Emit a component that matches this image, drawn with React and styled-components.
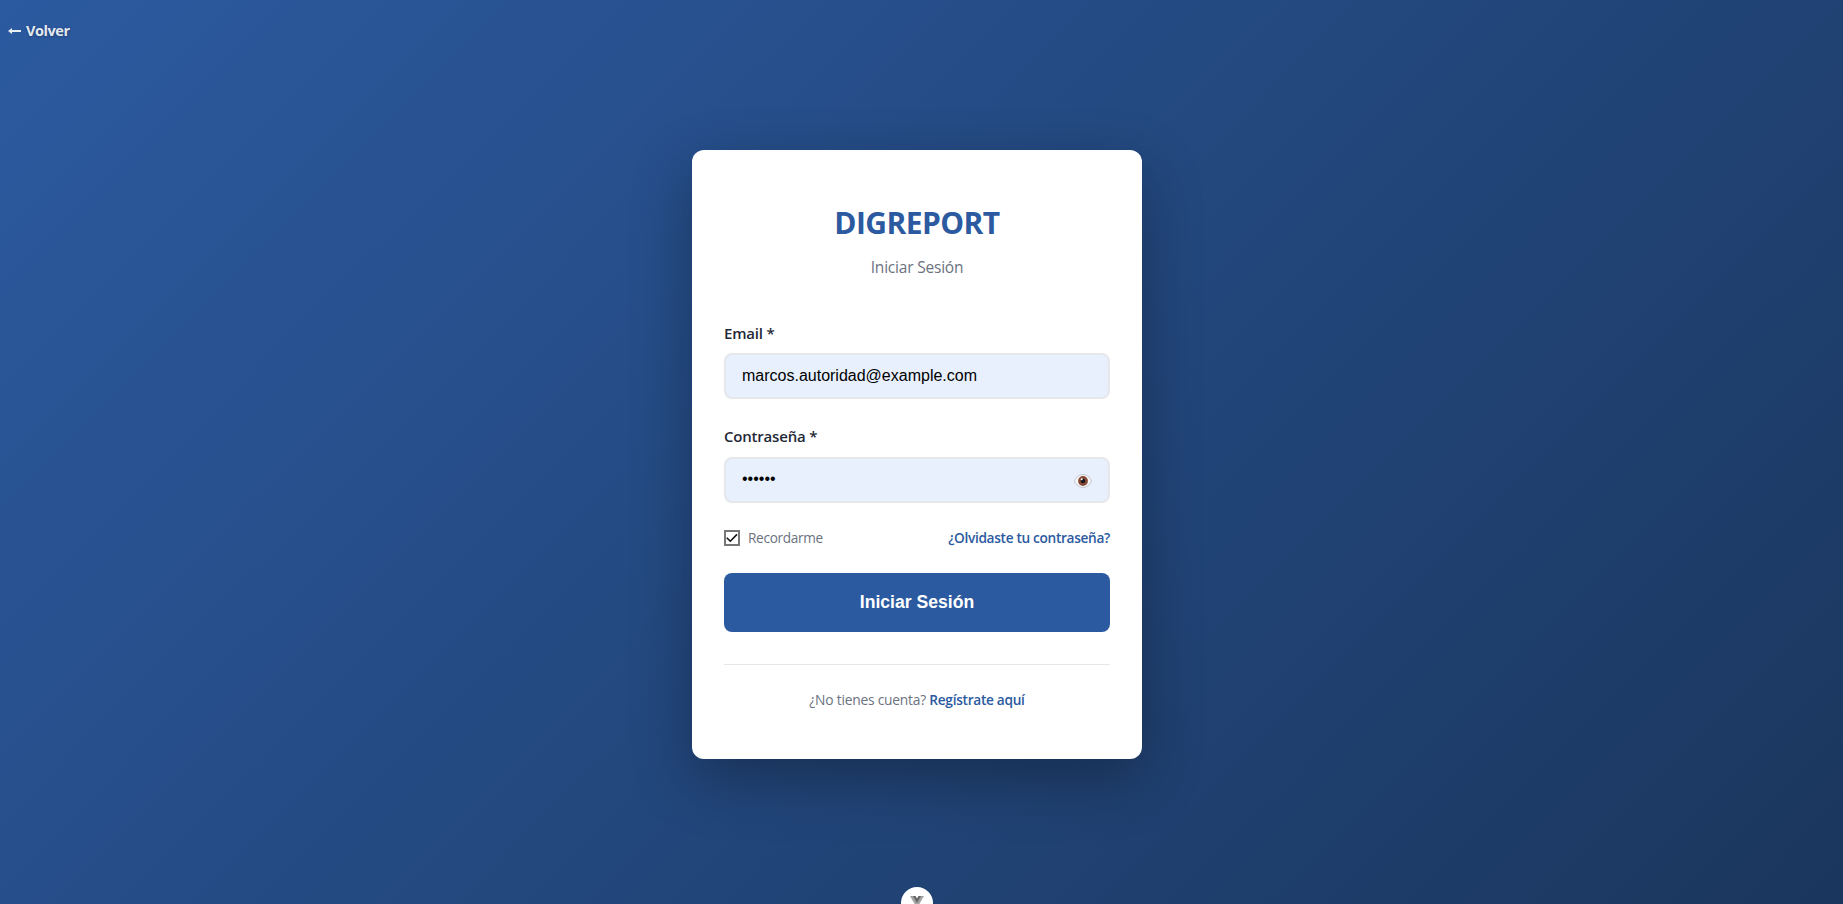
import React, { useState } from "react";
import styled, { createGlobalStyle } from "styled-components";

const GlobalStyle = createGlobalStyle`
  *, *::before, *::after { box-sizing: border-box; }
  html, body { margin: 0; padding: 0; overflow: hidden; }
  body { font-family: "Open Sans", "Noto Sans", sans-serif; }
`;

const Page = styled.main`
  position: relative;
  display: flex;
  flex-direction: column;
  align-items: center;
  height: 904px;
  padding: 150px 9px 0 0;
  overflow: hidden;
  background: linear-gradient(135deg, #2c5aa0 0%, #1a365d 100%);
`;

const BackLink = styled.a`
  position: absolute;
  top: 20px;
  left: 8px;
  display: flex;
  align-items: center;
  gap: 5px;
  height: 22px;
  color: rgba(255, 255, 255, 0.9);
  font-size: 14.5px;
  font-weight: 700;
  letter-spacing: -0.45px;
  line-height: 22px;
  text-decoration: none;
  text-shadow: 0 1px 3px rgba(0, 0, 0, 0.3);
`;

const Card = styled.section`
  width: 450px;
  height: 609px;
  padding: 55px 32px 0;
  border-radius: 12px;
  background: #fff;
  box-shadow: 0 20px 60px rgba(0, 0, 0, 0.3);
`;

const Header = styled.header`
  margin-bottom: 42px;
  text-align: center;
`;

const Title = styled.h1`
  margin: 0 0 14px;
  color: #2c5aa0;
  font-size: 30px;
  font-weight: 700;
  letter-spacing: -0.55px;
  line-height: 36px;
`;

const Subtitle = styled.p`
  margin: 0;
  color: #6b7280;
  font-size: 15.5px;
  letter-spacing: -0.2px;
  line-height: 24px;
`;

const Field = styled.div`
  display: flex;
  flex-direction: column;
  gap: ${({ $last }) => ($last ? "9px" : "8px")};
  margin-bottom: ${({ $last }) => ($last ? "24px" : "25px")};
`;

const Label = styled.label`
  color: #1f2937;
  font-size: 15px;
  font-weight: 600;
  letter-spacing: ${({ $tracking }) => $tracking};
  line-height: 24px;
`;

const InputShell = styled.div`
  display: flex;
  align-items: center;
  height: 46px;
  padding: 0 16px ${({ $lift }) => ($lift ? "2px" : "0")};
  border: 2px solid #e5e7eb;
  border-radius: 8px;
  background: #e8f0fe;
`;

const Input = styled.input`
  flex: 1;
  min-width: 0;
  padding: 0;
  border: 0;
  outline: 0;
  background: transparent;
  color: #000;
  font: 16px "Liberation Sans", Arial, sans-serif;
`;

const EyeButton = styled.button`
  display: flex;
  padding: 3px 0 0;
  border: 0;
  background: none;
`;

const Options = styled.div`
  display: flex;
  justify-content: space-between;
  align-items: center;
  height: 22px;
  margin-bottom: 24px;
`;

const Remember = styled.label`
  display: flex;
  align-items: center;
  gap: 8px;
  color: #6b7280;
  font-size: 13.6px;
  letter-spacing: -0.3px;
  line-height: 22px;
`;

const Checkbox = styled.span`
  display: flex;
  width: 16px;
  height: 16px;
  border: 2px solid #767676;
  background: #fff;
`;

const Link = styled.a`
  color: #2c5aa0;
  font-size: 13.7px;
  font-weight: 600;
  letter-spacing: ${({ $tracking }) => $tracking};
  line-height: 22px;
  text-decoration: none;
`;

const Submit = styled.button`
  display: block;
  width: 100%;
  height: 59px;
  padding: 0;
  border: 0;
  border-radius: 8px;
  background: #2c5aa0;
  color: #fff;
  font: 700 17.6px "Liberation Sans", Arial, sans-serif;
`;

const Footer = styled.footer`
  margin-top: 32px;
  padding-top: 24px;
  border-top: 1px solid #e5e7eb;
  color: #6b7280;
  font-size: 13.8px;
  letter-spacing: -0.22px;
  line-height: 22px;
  text-align: center;
`;

const DevBadge = styled.div`
  position: absolute;
  top: 887px;
  left: 901px;
  display: flex;
  justify-content: center;
  width: 32px;
  height: 32px;
  padding-top: 9px;
  border-radius: 50%;
  background: #fff;
`;

const ArrowIcon = () => (
  <svg width="13" height="8" viewBox="0 0 13 8" fill="rgba(255,255,255,.9)">
    <path d="M0 4 4 1v2h9v2H4v2z" />
  </svg>
);

const EyeIcon = () => (
  <svg width="18" height="14" viewBox="0 0 18 14">
    <path d="M.5 7C2.5 2.5 5.5.6 9 .6S15.500 2.500 17.500 7C15.500 11.500 12.500 13.400 9 13.400S2.500 11.500.5 7Z" fill="#fafafa" stroke="#b9bcc4" strokeWidth=".9" />
    <circle cx="9" cy="7" r="4.9" fill="#874a38" />
    <circle cx="9" cy="7" r="2.300" fill="#17191f" />
    <circle cx="7.700" cy="5.300" r="1" fill="#fff" />
  </svg>
);

const CheckIcon = () => (
  <svg width="12" height="12" viewBox="0 0 12 12" fill="none" stroke="#111" strokeWidth="1.6">
    <path d="M.8 5.700 4.300 9.200 11 2.400" />
  </svg>
);

const VueIcon = () => (
  <svg width="14" height="12" viewBox="0 0 14 12">
    <path d="M0 0h3l4 7 4-7h3L7 12z" fill="#a3a3a3" />
    <path d="M2.800 0h2.700L7 2.600 8.500 0h2.700L7 7.200z" fill="#666" />
  </svg>
);

export default function App() {
  const [email, setEmail] = useState("marcos.autoridad@example.com");
  const [password, setPassword] = useState("secret");
  return (
    <>
      <GlobalStyle />
      <Page>
        <BackLink><ArrowIcon />Volver</BackLink>
        <Card>
          <Header>
            <Title>DIGREPORT</Title>
            <Subtitle>Iniciar Sesión</Subtitle>
          </Header>
          <Field>
            <Label htmlFor="email" $tracking="-0.2px">Email *</Label>
            <InputShell>
              <Input id="email" value={email} onChange={(e) => setEmail(e.target.value)} />
            </InputShell>
          </Field>
          <Field $last>
            <Label htmlFor="password" $tracking="-0.2px">Contraseña *</Label>
            <InputShell $lift>
              <Input id="password" type="password" value={password} onChange={(e) => setPassword(e.target.value)} />
              <EyeButton type="button"><EyeIcon /></EyeButton>
            </InputShell>
          </Field>
          <Options>
            <Remember><Checkbox><CheckIcon /></Checkbox>Recordarme</Remember>
            <Link $tracking="-0.33px">¿Olvidaste tu contraseña?</Link>
          </Options>
          <Submit type="button">Iniciar Sesión</Submit>
          <Footer>
            ¿No tienes cuenta? <Link $tracking="-0.3px">Regístrate aquí</Link>
          </Footer>
        </Card>
        <DevBadge><VueIcon /></DevBadge>
      </Page>
    </>
  );
}
